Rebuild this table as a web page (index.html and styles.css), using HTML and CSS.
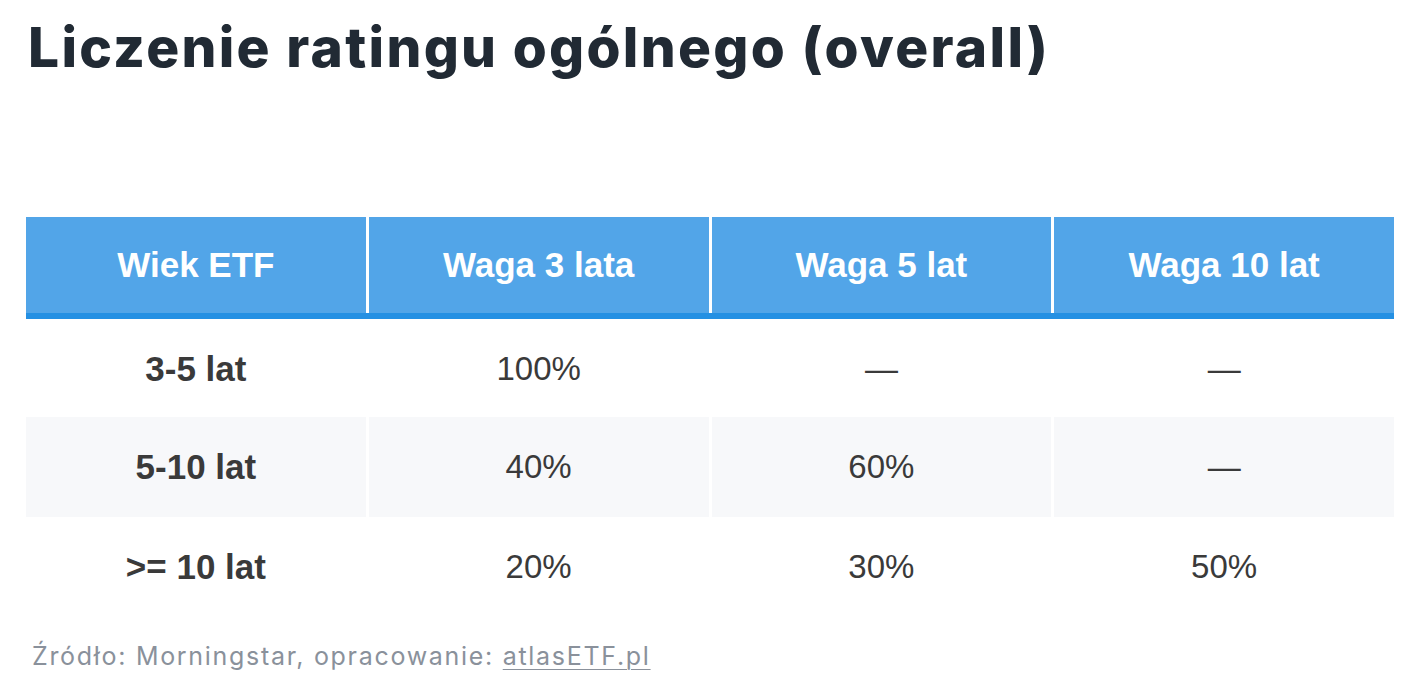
FILE: index.html
```html
<!DOCTYPE html>
<html lang="pl">
<head>
<meta charset="utf-8">
<title>Liczenie ratingu ogólnego (overall)</title>
<link rel="stylesheet" href="styles.css">
</head>
<body>
<main class="page">
  <h1 class="title">Liczenie ratingu ogólnego (overall)</h1>
  <div class="table" role="table">
    <div class="row head" role="row">
      <div class="cell" role="columnheader">Wiek ETF</div>
      <div class="cell" role="columnheader">Waga 3 lata</div>
      <div class="cell" role="columnheader">Waga 5 lat</div>
      <div class="cell" role="columnheader">Waga 10 lat</div>
    </div>
    <div class="row body r1" role="row">
      <div class="cell label" role="cell">3-5 lat</div>
      <div class="cell" role="cell">100%</div>
      <div class="cell" role="cell">—</div>
      <div class="cell" role="cell">—</div>
    </div>
    <div class="row body alt" role="row">
      <div class="cell label" role="cell">5-10 lat</div>
      <div class="cell" role="cell">40%</div>
      <div class="cell" role="cell">60%</div>
      <div class="cell" role="cell">—</div>
    </div>
    <div class="row body" role="row">
      <div class="cell label" role="cell">&gt;= 10 lat</div>
      <div class="cell" role="cell">20%</div>
      <div class="cell" role="cell">30%</div>
      <div class="cell" role="cell">50%</div>
    </div>
  </div>
  <p class="source">Źródło: Morningstar, opracowanie: <a class="link" href="#">atlasETF.pl</a></p>
</main>
</body>
</html>
```
FILE: styles.css
```css
html, body {
  margin: 0;
  padding: 0;
  background: #ffffff;
}

.page {
  padding: 14px 24px 0 26px;
  width: 1368px;
}

.title {
  margin: 0 0 0 2px;
  font-family: Inter, "Noto Sans", sans-serif;
  font-weight: 800;
  font-size: 55px;
  line-height: 66px;
  letter-spacing: 2.3px;
  color: #212a34;
  white-space: nowrap;
}

.table {
  margin-top: 137px;
  width: 1368px;
  font-family: "Liberation Sans", Arial, sans-serif;
}

.row {
  display: grid;
  grid-template-columns: repeat(4, 1fr);
  column-gap: 3px;
}

.cell {
  display: flex;
  align-items: center;
  justify-content: center;
}

.head {
  border-bottom: 6px solid #2490e3;
}

.head .cell {
  height: 96px;
  background: #52a5e8;
  color: #ffffff;
  font-weight: 700;
  font-size: 35px;
}

.body .cell {
  height: 100px;
  font-size: 33px;
  color: #3a3a3a;
}

.body.r1 .cell {
  height: 98px;
  padding-top: 2px;
  box-sizing: border-box;
}

.body .label {
  font-weight: 700;
  font-size: 35px;
}

.alt .cell {
  background: #f7f8fa;
}

.source {
  margin: 24px 0 0 6px;
  font-family: Inter, "Noto Sans", sans-serif;
  font-size: 25px;
  line-height: 30px;
  letter-spacing: 1.7px;
  color: #8a919b;
}

.link {
  color: #8a919b;
  text-decoration: underline;
  text-underline-offset: 4px;
  text-decoration-thickness: 1px;
}
```
